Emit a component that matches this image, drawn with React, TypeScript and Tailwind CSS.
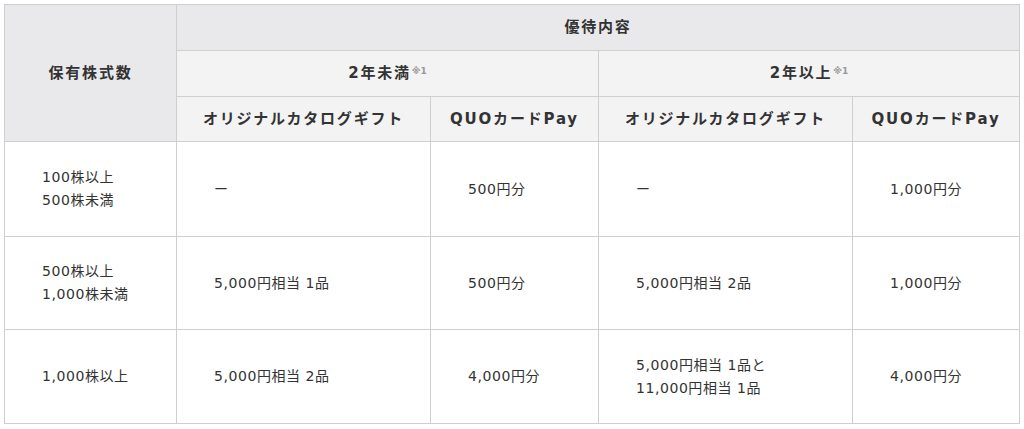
import React from "react";

const font = {
  fontFamily: '"DejaVu Sans", "Noto Sans CJK JP", sans-serif',
};

const Sup = () => (
  <sup className="text-[9px] font-bold text-[#999] tracking-normal ml-[1px] relative -top-[4px]">※1</sup>
);

const td = "border border-[#cfcfcf] pl-[37px] pr-2 text-left align-middle text-[14px] leading-[23px] tracking-[0.04em] text-[#333] font-normal";
const thTop = "border border-[#cfcfcf] bg-[#e9e9ec] text-center align-middle text-[15px] font-bold tracking-[0.12em] text-[#333]";
const thSub = "border border-[#cfcfcf] bg-[#f4f3f4] text-center align-middle text-[15px] font-bold tracking-[0.12em] text-[#333]";

export default function App() {
  const rows: { shares: string[]; c1: string[]; c2: string; c3: string[]; c4: string; h: string }[] = [
    { shares: ["100株以上", "500株未満"], c1: ["ー"], c2: "500円分", c3: ["ー"], c4: "1,000円分", h: "h-[95px]" },
    { shares: ["500株以上", "1,000株未満"], c1: ["5,000円相当 1品"], c2: "500円分", c3: ["5,000円相当 2品"], c4: "1,000円分", h: "h-[93px]" },
    { shares: ["1,000株以上"], c1: ["5,000円相当 2品"], c2: "4,000円分", c3: ["5,000円相当 1品と", "11,000円相当 1品"], c4: "4,000円分", h: "h-[94px]" },
  ];
  return (
    <div className="w-[1024px] h-[429px] bg-white p-[4px]" style={font}>
      <table className="w-[1015px] table-fixed border-collapse">
        <colgroup>
          <col className="w-[172px]" />
          <col className="w-[254px]" />
          <col className="w-[168px]" />
          <col className="w-[254px]" />
          <col className="w-[167px]" />
        </colgroup>
        <thead>
          <tr className="h-[46px]">
            <th rowSpan={3} className={thTop}>保有株式数</th>
            <th colSpan={4} className={thTop}>優待内容</th>
          </tr>
          <tr className="h-[46px]">
            <th colSpan={2} className={thSub}>2年未満<Sup /></th>
            <th colSpan={2} className={thSub}>2年以上<Sup /></th>
          </tr>
          <tr className="h-[45px]">
            <th className={thSub}>オリジナルカタログギフト</th>
            <th className={thSub}>QUOカードPay</th>
            <th className={thSub}>オリジナルカタログギフト</th>
            <th className={thSub}>QUOカードPay</th>
          </tr>
        </thead>
        <tbody>
          {rows.map((r, i) => (
            <tr key={i} className={r.h}>
              <td className={td}>{r.shares.map((s, j) => <div key={j}>{s}</div>)}</td>
              <td className={td}>{r.c1.map((s, j) => <div key={j}>{s}</div>)}</td>
              <td className={td}>{r.c2}</td>
              <td className={td}>{r.c3.map((s, j) => <div key={j}>{s}</div>)}</td>
              <td className={td}>{r.c4}</td>
            </tr>
          ))}
        </tbody>
      </table>
    </div>
  );
}
